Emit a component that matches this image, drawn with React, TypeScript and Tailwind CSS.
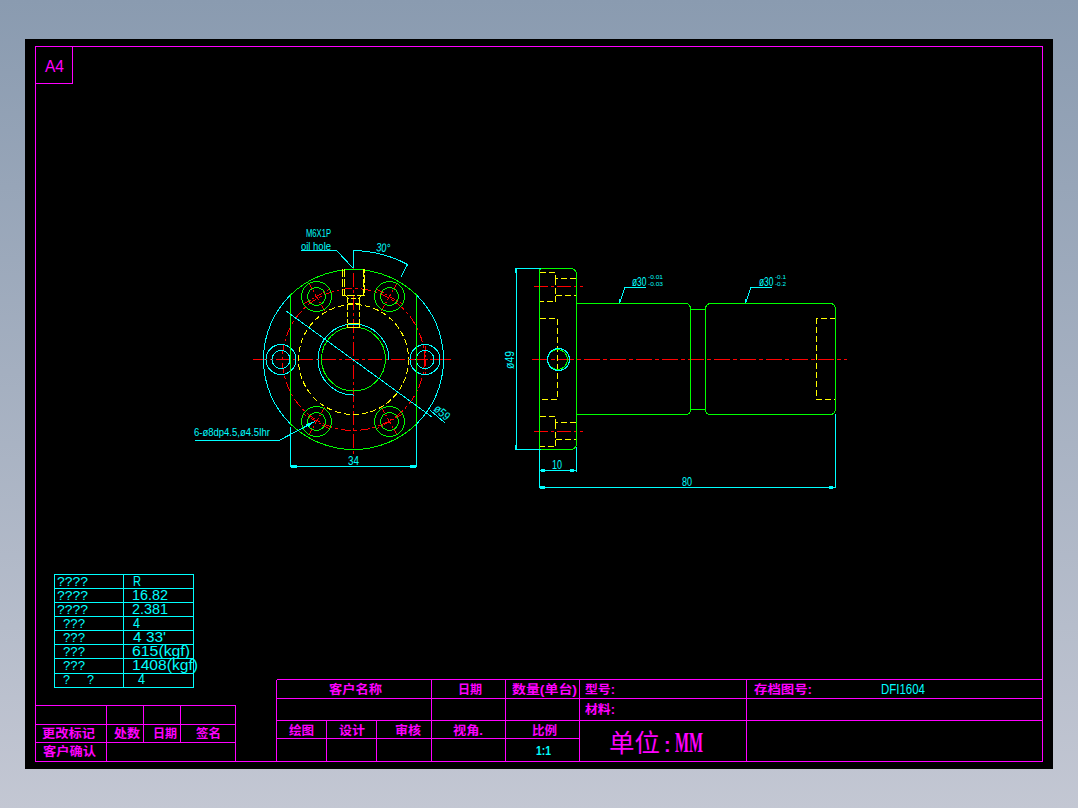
const MAGENTA = '#ff00ff';
const CYAN = '#00ffff';
const GREEN = '#00ff00';
const YELLOW = '#ffff00';
const RED = '#ff0000';

const DASHED = '6 3';
const CENTER = '14 3 3 3';

type LineProps = { d: string; color: string; dash?: string; width?: number };

function P({ d, color, dash, width = 1 }: LineProps) {
  return <path d={d} fill="none" stroke={color} strokeWidth={width} strokeDasharray={dash} />;
}

function C({ x, y, r, color, dash }: { x: number; y: number; r: number; color: string; dash?: string }) {
  return <circle cx={x} cy={y} r={r} fill="none" stroke={color} strokeDasharray={dash} />;
}

type TextProps = {
  x: number;
  y: number;
  w?: number;
  size: number;
  color?: string;
  bold?: boolean;
  rotate?: number;
  children: string;
};

function T({ x, y, w, size, color = CYAN, bold, rotate, children }: TextProps) {
  return (
    <text
      x={x}
      y={y}
      fontSize={size}
      fill={color}
      fontWeight={bold ? 700 : 400}
      textLength={w}
      lengthAdjust={w ? 'spacingAndGlyphs' : undefined}
      transform={rotate ? `rotate(${rotate} ${x} ${y})` : undefined}
    >
      {children}
    </text>
  );
}

// narrow label, squeezed with a transform so its box stays clear of the tolerances beside it
function Narrow({ x, y, size, scale, children }: { x: number; y: number; size: number; scale: number; children: string }) {
  return (
    <text fontSize={size} fill={CYAN} transform={`translate(${x} ${y}) scale(${scale} 1)`}>
      {children}
    </text>
  );
}

const CX = 353.5;
const CY = 359.5;

const holes = [
  { x: 316.5, y: 296.5, angle: -120, color: GREEN, cross: true },
  { x: 389.5, y: 296.5, angle: -60, color: GREEN, cross: true },
  { x: 316.5, y: 421.5, angle: 120, color: GREEN, cross: true },
  { x: 389.5, y: 421.5, angle: 60, color: GREEN, cross: true },
  { x: 281, y: 359.5, angle: 180, color: CYAN, cross: false },
  { x: 425, y: 359.5, angle: 0, color: CYAN, cross: true },
];

type HoleProps = { x: number; y: number; angle: number; color: string; cross: boolean };

function Hole({ x, y, angle, color, cross }: HoleProps) {
  const rad = (angle * Math.PI) / 180;
  const ux = Math.cos(rad);
  const uy = Math.sin(rad);
  const d = `M${x - ux * 17} ${y - uy * 17}L${x + ux * 17} ${y + uy * 17}M${x + uy * 14} ${y - ux * 14}L${x - uy * 14} ${y + ux * 14}`;
  return (
    <g>
      {cross && <P d={d} color={RED} dash="7 2 2 2" />}
      <C x={x} y={y} r={15} color={color} />
      <C x={x} y={y} r={9} color={color} />
    </g>
  );
}

function FrontView() {
  return (
    <g>
      {/* center lines and pitch circle */}
      <P d="M253 359.5H453" color={RED} dash={CENTER} />
      <P d="M353.5 250V456" color={RED} dash={CENTER} />
      <C x={CX} y={CY} r={71} color={RED} dash="10 3 3 3" />
      <C x={CX} y={CY} r={55} color={YELLOW} dash={DASHED} />
      {holes.map((h) => (
        <Hole key={`${h.x}-${h.y}`} {...h} />
      ))}

      {/* flange outline */}
      <P d="M290.5 295A90.5 90.5 0 0 0 290.5 424" color={CYAN} />
      <P d="M416.5 295A90.5 90.5 0 0 1 416.5 424" color={CYAN} />
      <P d="M290.5 295A90.5 90.5 0 0 1 416.5 295" color={GREEN} />
      <P d="M290.5 424A90.5 90.5 0 0 0 416.5 424" color={GREEN} />
      <P d="M290.5 295V424M416.5 295V424" color={GREEN} />

      {/* bore */}
      <C x={CX} y={359} r={32} color={GREEN} />
      <P d="M389 359.5A35.5 35.5 0 1 0 353.5 395" color={CYAN} />

      {/* oil hole */}
      <P d="M342.5 269V295H364.5V269M344 269V295M363 269V295" color={YELLOW} dash="8 2" />
      <P d="M345 295L348 298H359L362 295M347.5 297.5V323M359.5 297.5V323M347.5 303H359.5" color={YELLOW} dash="5 2" />
      <P d="M347.5 323.5H359.5M347.5 327.5H359.5M347.5 323.5V327.5M359.5 323.5V327.5" color={YELLOW} />

      {/* dimensions */}
      <P d="M286 311L432 417" color={CYAN} />
      <P d="M430 410L445 423" color={CYAN} />
      <T x={433} y={410} size={12} w={17} rotate={41}>ø59</T>
      <T x={306} y={237} size={11} w={25}>M6X1P</T>
      <T x={301} y={249.5} size={11} w={30}>oil hole</T>
      <P d="M301 250.5H336.5L353 268" color={CYAN} />
      <P d="M353.5 250V268" color={CYAN} />
      <P d="M353.5 250.5C372 251 392 256 407.5 264.5L401 277" color={CYAN} />
      <T x={376} y={251} size={12} w={14} rotate={6}>30°</T>
      <P d="M290.5 427V467M416.5 424V467M290.5 466.5H416.5" color={CYAN} />
      <path d="M291 465h6v3h-6zM410 465h6v3h-6z" fill={CYAN} />
      <T x={348} y={465} size={13} w={11}>34</T>
      <T x={194} y={436} size={11} w={76}>6-ø8dp4.5,ø4.5Ihr</T>
      <P d="M195 440.5H279L315 421.5" color={CYAN} />
      <path d="M315 421L306 424L308 427Z" fill={CYAN} />
    </g>
  );
}

function SideView() {
  return (
    <g>
      <P d="M532 359.5H847" color={RED} dash="16 3 4 3" />
      <P d="M534 286.5H583M534 431.5H583" color={RED} dash="14 3 3 3" />

      {/* yellow hidden lines */}
      <P d="M540 272.5H555.5V278.5H577M555.5 278.5V295.5M555.5 295.5H577M555.5 295.5V301.5H540" color={YELLOW} dash={DASHED} />
      <P d="M540 416.5H555.5V422.5H577M555.5 422.5V439.5M555.5 439.5H577M555.5 439.5V446.5H540" color={YELLOW} dash={DASHED} />
      <P d="M540 318.5H557.5V399.5H540" color={YELLOW} dash={DASHED} />
      <P d="M835.5 318.5H816.5V399.5H835.5" color={YELLOW} dash={DASHED} />

      {/* green outline */}
      <P d="M539.5 271Q539.5 268.5 542 268.5H570Q576.5 268.5 576.5 275V443Q576.5 449.5 570 449.5H542Q539.5 449.5 539.5 447Z" color={GREEN} />
      <P d="M576.5 303.5H686Q690.5 304 690.5 309.5V409.5Q690.5 414.5 686 414.5H576.5" color={GREEN} />
      <P d="M690.5 309.5H705.5M690.5 409.5H705.5" color={GREEN} />
      <P d="M705.5 309.5Q705.5 303.5 711 303.5H830Q835.5 303.5 835.5 310V408Q835.5 414.5 830 414.5H711Q705.5 414.5 705.5 409.5Z" color={GREEN} />
      <C x={557.5} y={359.5} r={10} color={GREEN} />
      <C x={558.5} y={359.5} r={11} color={CYAN} />

      {/* dimensions */}
      <P d="M541 268.5H516.5V449.5H541" color={CYAN} />
      <P d="M515.5 268V273M515.5 445V450" color={CYAN} width={2} />
      <T x={514} y={369} size={12} w={18} rotate={-90}>ø49</T>
      <P d="M539.5 449V488M576.5 447V472M540 470.5H576.5" color={CYAN} />
      <P d="M835.5 414V488M540 487.5H835.5" color={CYAN} />
      <path d="M541 469h4v3h-4zM570 469h4v3h-4zM540 486h5v3h-5zM829 486h4v3h-4z" fill={CYAN} />
      <T x={552} y={468.5} size={12} w={10}>10</T>
      <T x={682} y={485.5} size={12} w={10}>80</T>

      <P d="M646 287.5H625L619.5 303" color={CYAN} />
      <P d="M771.5 287.5H751L745.5 303" color={CYAN} />
      <path d="M619 303l0.5-4 2 1ZM745 303l0.5-4 2 1Z" fill={CYAN} />
      <Narrow x={632} y={286} size={12} scale={0.7}>ø30</Narrow>
      <T x={648} y={279} size={5} w={15}>-0.01</T>
      <T x={648} y={286} size={5} w={15}>-0.03</T>
      <Narrow x={759} y={286} size={12} scale={0.7}>ø30</Narrow>
      <T x={775} y={279} size={5} w={11}>-0.1</T>
      <T x={775} y={286} size={5} w={11}>-0.2</T>
    </g>
  );
}

const tableRows = [
  { k: '????', kx: 57, kw: 31, v: 'R', vx: 133, vw: 8 },
  { k: '????', kx: 57, kw: 31, v: '16.82', vx: 132, vw: 36 },
  { k: '????', kx: 57, kw: 31, v: '2.381', vx: 132, vw: 36 },
  { k: '???', kx: 63, kw: 22, v: '4', vx: 133, vw: 7 },
  { k: '???', kx: 63, kw: 22, v: "4 33'", vx: 133, vw: 33 },
  { k: '???', kx: 63, kw: 22, v: '615(kgf)', vx: 132, vw: 58 },
  { k: '???', kx: 63, kw: 22, v: '1408(kgf)', vx: 132, vw: 66 },
];

const rowYs = [574.5, 588.5, 602.5, 616.5, 630.5, 644.5, 658.5, 673.5, 687.5];

function ParamTable() {
  return (
    <g>
      {rowYs.map((y) => (
        <P key={y} d={`M54 ${y}H194`} color={CYAN} />
      ))}
      <P d="M54.5 574V688M123.5 574V688M193.5 574V688" color={CYAN} />
      {tableRows.map((r, i) => (
        <g key={i}>
          <T x={r.kx} y={rowYs[i] + 11} size={12} w={r.kw}>{r.k}</T>
          <T x={r.vx} y={rowYs[i] + 11.5} size={14} w={r.vw}>{r.v}</T>
        </g>
      ))}
      <T x={63} y={684} size={12} w={7}>?</T>
      <T x={87} y={684} size={12} w={7}>?</T>
      <T x={138} y={684} size={14} w={7}>4</T>
    </g>
  );
}

function Label({ x, y, w, size = 12, children }: { x: number; y: number; w: number; size?: number; children: string }) {
  return (
    <T x={x} y={y} w={w} size={size} color={MAGENTA} bold>
      {children}
    </T>
  );
}

function RevisionBlock() {
  return (
    <g>
      <P d="M36 705.5H235.5V761M36 724.5H235.5M36 742.5H235.5" color={MAGENTA} />
      <P d="M106.5 705.5V761M143.5 705.5V742.5M180.5 705.5V742.5" color={MAGENTA} />
      <Label x={42} y={738} w={53}>更改标记</Label>
      <Label x={114} y={738} w={26}>处数</Label>
      <Label x={153} y={738} w={24}>日期</Label>
      <Label x={196} y={738} w={25}>签名</Label>
      <Label x={43} y={756} w={53}>客户确认</Label>
    </g>
  );
}

function TitleBlock() {
  return (
    <g>
      <P d="M276.5 679.5H1042M276.5 698.5H1042M276.5 720.5H1042M276.5 738.5H579.5" color={MAGENTA} />
      <P d="M276.5 679.5V761M431.5 679.5V761M505.5 679.5V761M579.5 679.5V761M746.5 679.5V761M326.5 720.5V761M376.5 720.5V761" color={MAGENTA} />
      <Label x={329} y={694} w={53}>客户名称</Label>
      <Label x={458} y={694} w={24}>日期</Label>
      <Label x={512} y={694} w={65}>数量(单台)</Label>
      <Label x={585} y={694} w={30}>型号:</Label>
      <Label x={585} y={714} w={30}>材料:</Label>
      <Label x={754} y={694} w={58}>存档图号:</Label>
      <Label x={289} y={735} w={25}>绘图</Label>
      <Label x={339} y={735} w={26}>设计</Label>
      <Label x={395} y={735} w={26}>审核</Label>
      <Label x={453} y={735} w={30}>视角.</Label>
      <Label x={532} y={735} w={25}>比例</Label>
      <T x={536} y={755} size={13} w={15} bold>1:1</T>
      <T x={881} y={694} size={14} w={44}>DFI1604</T>
      <T x={609} y={752} size={25} w={51} color={MAGENTA}>单位</T>
      <T x={664} y={752} size={20} color={MAGENTA} bold>:</T>
      <text x={675} y={752} fontSize={29} fill={MAGENTA} fontWeight={700} textLength={28} lengthAdjust="spacingAndGlyphs" className="font-['Liberation_Serif','Noto_Sans_CJK_SC',serif]">
        MM
      </text>
    </g>
  );
}

export default function App() {
  return (
    <div className="h-[808px] w-full overflow-hidden bg-gradient-to-b from-[#8a9bb0] to-[#c3c7d3] pl-[25px] pt-[39px]">
      <div className="h-[730px] w-[1028px] bg-black">
        <svg
          viewBox="25 39 1028 730"
          width={1028}
          height={730}
          shapeRendering="crispEdges"
          className="block font-['Liberation_Sans','Noto_Sans_CJK_SC',sans-serif]"
        >
          {/* sheet frame */}
          <P d="M35.5 46.5H1042.5V761.5H35.5Z" color={MAGENTA} />
          <P d="M72.5 46.5V83.5H35.5" color={MAGENTA} />
          <T x={45} y={72} size={17} w={19} color={MAGENTA}>A4</T>

          <FrontView />
          <SideView />
          <ParamTable />
          <RevisionBlock />
          <TitleBlock />
        </svg>
      </div>
    </div>
  );
}
